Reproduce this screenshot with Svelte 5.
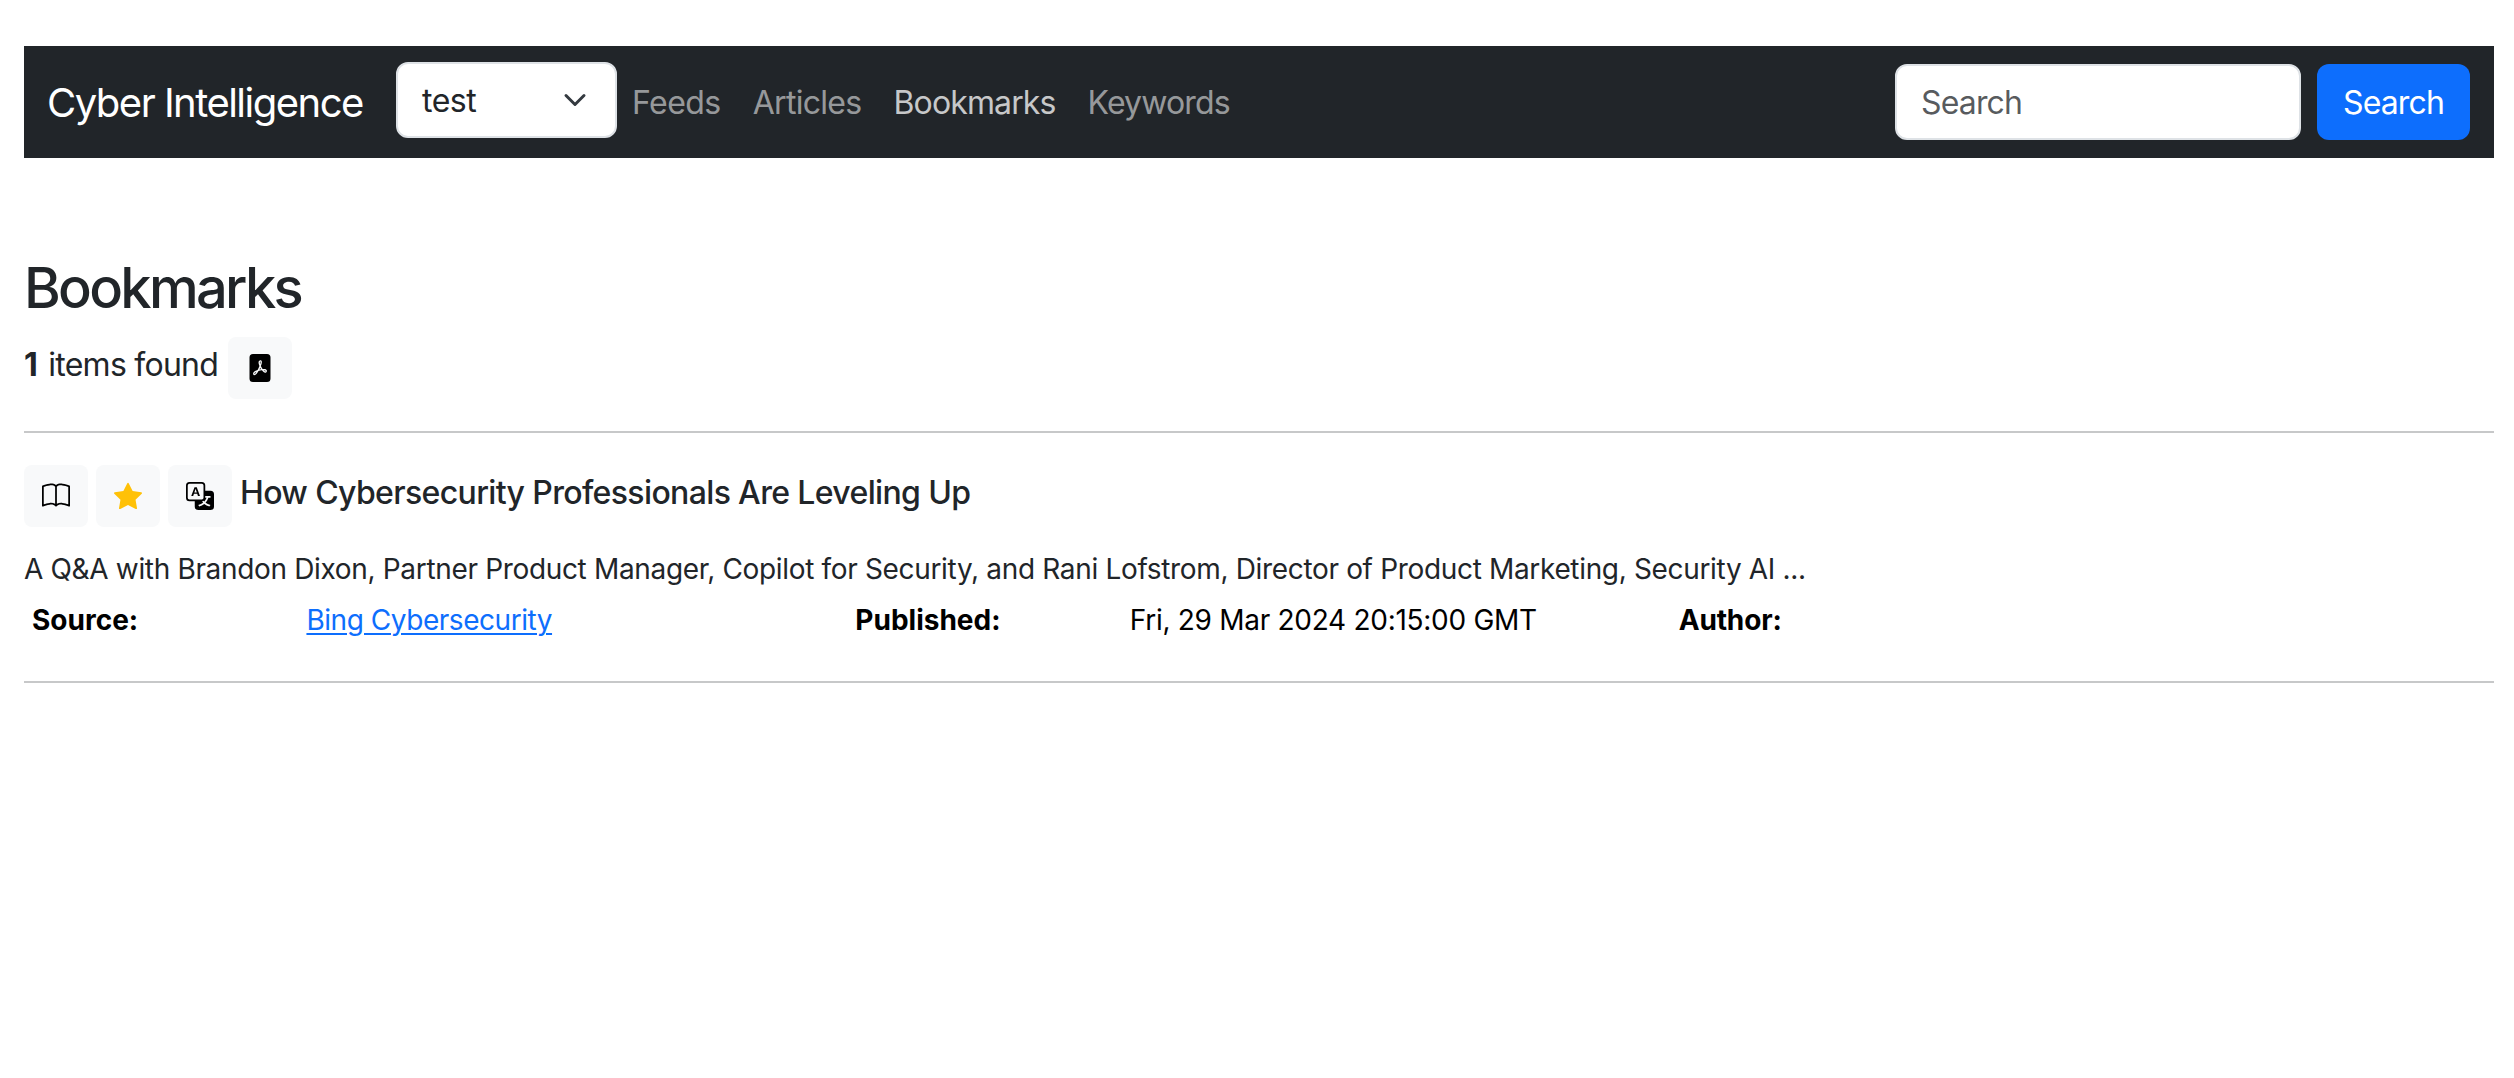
<script>
  const links = [
    { label: 'Feeds', cls: 'feeds' },
    { label: 'Articles', cls: 'articles' },
    { label: 'Bookmarks', cls: 'current' },
    { label: 'Keywords', cls: '' }
  ];

  const articles = [
    {
      title: 'How Cybersecurity Professionals Are Leveling Up',
      summary:
        'A Q&A with Brandon Dixon, Partner Product Manager, Copilot for Security, and Rani Lofstrom, Director of Product Marketing, Security AI ...',
      source: 'Bing Cybersecurity',
      published: 'Fri, 29 Mar 2024 20:15:00 GMT',
      author: ''
    }
  ];
</script>

{#snippet icon(name)}
  <svg class="icon" class:star={name === 'star'} viewBox="0 0 16 16" aria-hidden="true">
    {#if name === 'pdf'}
      <path d="M5.523 10.424q.21-.124.459-.238a8 8 0 0 1-.45.606c-.28.337-.498.516-.635.572l-.035.012a.3.3 0 0 1-.026-.044c-.056-.11-.054-.216.04-.36.106-.165.319-.354.647-.548m2.455-1.647q-.178.037-.356.078a21 21 0 0 0 .5-1.05 12 12 0 0 0 .51.858q-.326.048-.654.114m2.525.939a4 4 0 0 1-.435-.41q.344.007.612.054c.317.057.466.147.518.209a.1.1 0 0 1 .026.064.44.44 0 0 1-.06.2.3.3 0 0 1-.094.124.1.1 0 0 1-.069.015c-.09-.003-.258-.066-.498-.256M8.278 4.97c-.04.244-.108.524-.2.829a5 5 0 0 1-.089-.346c-.076-.353-.087-.63-.046-.822.038-.177.11-.248.196-.283a.5.5 0 0 1 .145-.04c.013.03.028.092.032.198q.008.183-.038.465z" />
      <path fill-rule="evenodd" d="M4 0h8a2 2 0 0 1 2 2v12a2 2 0 0 1-2 2H4a2 2 0 0 1-2-2V2a2 2 0 0 1 2-2m.165 11.668c.09.18.23.343.438.419.207.075.412.04.58-.03.318-.13.635-.436.926-.786.333-.401.683-.927 1.021-1.51a11.6 11.6 0 0 1 1.997-.406c.3.383.61.713.91.95.28.22.603.403.934.417a.86.86 0 0 0 .51-.138c.155-.101.27-.247.354-.416.09-.181.145-.37.138-.563a.84.84 0 0 0-.2-.518c-.226-.27-.596-.4-.96-.465a5.8 5.8 0 0 0-1.335-.05 11 11 0 0 1-.98-1.686c.25-.66.437-1.284.52-1.794.036-.218.055-.426.048-.614a1.24 1.24 0 0 0-.127-.538.7.7 0 0 0-.477-.365c-.202-.043-.41 0-.601.077-.377.15-.576.47-.651.823-.073.34-.04.736.046 1.136.088.406.238.848.43 1.295a20 20 0 0 1-1.062 2.227 7.7 7.7 0 0 0-1.482.645c-.37.22-.699.48-.897.787-.21.326-.275.714-.08 1.103" />
    {:else if name === 'book'}
      <path d="M1 2.828c.885-.37 2.154-.769 3.388-.893 1.33-.134 2.458.063 3.112.752v9.746c-.935-.53-2.12-.603-3.213-.493-1.18.12-2.37.461-3.287.811zm7.5-.141c.654-.689 1.782-.886 3.112-.752 1.234.124 2.503.523 3.388.893v9.923c-.918-.35-2.107-.692-3.287-.81-1.094-.111-2.278-.039-3.213.492zM8 1.783C7.015.936 5.587.81 4.287.94c-1.514.153-3.042.672-3.994 1.105A.5.5 0 0 0 0 2.5v11a.5.5 0 0 0 .707.455c.882-.4 2.303-.881 3.68-1.02 1.409-.142 2.59.087 3.223.877a.5.5 0 0 0 .78 0c.633-.79 1.814-1.019 3.222-.877 1.378.139 2.8.62 3.681 1.02A.5.5 0 0 0 16 13.5v-11a.5.5 0 0 0-.293-.455c-.952-.433-2.48-.952-3.994-1.105C10.413.809 8.985.936 8 1.783" />
    {:else if name === 'star'}
      <path d="M3.612 15.443c-.386.198-.824-.149-.746-.592l.83-4.73L.173 6.765c-.329-.314-.158-.888.283-.95l4.898-.696L7.538.792c.197-.39.73-.39.927 0l2.184 4.327 4.898.696c.441.062.612.636.282.95l-3.522 3.356.83 4.73c.078.443-.36.79-.746.592L8 13.187l-4.389 2.256z" />
    {:else if name === 'translate'}
      <path d="M4.545 6.714 4.11 8H3l1.862-5h1.284L8 8H6.833l-.435-1.286zm1.634-.736L5.5 3.956h-.049l-.679 2.022z" />
      <path d="M0 2a2 2 0 0 1 2-2h7a2 2 0 0 1 2 2v3h3a2 2 0 0 1 2 2v7a2 2 0 0 1-2 2H7a2 2 0 0 1-2-2v-3H2a2 2 0 0 1-2-2zm2-1a1 1 0 0 0-1 1v7a1 1 0 0 0 1 1h7a1 1 0 0 0 1-1V2a1 1 0 0 0-1-1zm7.138 9.995q.289.451.63.846c-.748.575-1.673 1.001-2.768 1.292.178.217.451.635.555.867 1.125-.359 2.08-.844 2.886-1.494.777.665 1.739 1.165 2.93 1.472.133-.254.414-.673.629-.89-1.125-.253-2.057-.694-2.82-1.284.681-.747 1.222-1.651 1.621-2.757H14V8h-3v1.047h.765c-.318.844-.74 1.546-1.272 2.13a6 6 0 0 1-.415-.492 2 2 0 0 1-.94.31" />
    {/if}
  </svg>
{/snippet}

<div class="page">
  <nav class="navbar">
    <a class="brand" href="#home">Cyber Intelligence</a>
    <button class="select" type="button">
      <span>test</span>
      <svg class="chevron" viewBox="0 0 16 16" aria-hidden="true"><path d="m2 5 6 6 6-6" /></svg>
    </button>
    <div class="links">
      {#each links as link}
        <a class="link {link.cls}" href="#{link.label}">{link.label}</a>
      {/each}
    </div>
    <form class="search">
      <input type="search" placeholder="Search" aria-label="Search" />
      <button class="submit" type="button">Search</button>
    </form>
  </nav>

  <h3>Bookmarks</h3>
  <div class="summary">
    <span class="count"><b>1</b> items found</span>
    <button class="tool" type="button" aria-label="Export PDF">{@render icon('pdf')}</button>
  </div>
  <hr />

  {#each articles as a}
    <article>
      <div class="head">
        <button class="tool" type="button" aria-label="Read">{@render icon('book')}</button>
        <button class="tool" type="button" aria-label="Bookmark">{@render icon('star')}</button>
        <button class="tool" type="button" aria-label="Translate">{@render icon('translate')}</button>
        <h5>{a.title}</h5>
      </div>
      <p class="desc">{a.summary}</p>
      <div class="meta">
        <b>Source:</b>
        <span class="wide"><a class="source" href="#source">{a.source}</a></span>
        <b>Published:</b>
        <span class="wide date">{a.published}</span>
        <b class="author">Author:</b>
        <span class="wide">{a.author}</span>
      </div>
    </article>
    <hr />
  {/each}
</div>

<style>
  :global(body) {
    background: #fff;
  }
  .page {
    padding: 46px 20px 0 24px;
    font-family: Inter, 'Liberation Sans', sans-serif;
    font-size: 32px;
    line-height: 48px;
    color: #212529;
  }
  a {
    text-decoration: none;
  }
  button,
  input {
    font: inherit;
    box-sizing: border-box;
    margin: 0;
  }

  .navbar {
    display: flex;
    align-items: center;
    height: 112px;
    box-sizing: border-box;
    padding: 0 24px 0 23px;
    background: #212529;
  }
  .brand {
    width: 349px;
    flex: none;
    padding-top: 2px;
    font-size: 40px;
    line-height: 60px;
    letter-spacing: -1.52px;
    color: #fff;
    white-space: nowrap;
  }
  .select {
    display: flex;
    align-items: center;
    justify-content: space-between;
    width: 221px;
    height: 76px;
    margin-bottom: 4px;
    padding: 0 28px 0 24px;
    border: 2px solid #dee2e6;
    border-radius: 12px;
    background: #fff;
    color: #212529;
    letter-spacing: -0.5px;
  }
  .select span {
    padding-top: 1px;
  }
  .chevron {
    width: 24px;
    height: 24px;
    fill: none;
    stroke: #343a40;
    stroke-width: 2;
    stroke-linecap: round;
    stroke-linejoin: round;
  }
  .links {
    display: flex;
    gap: 32px;
    margin-left: 15px;
    padding-top: 1px;
  }
  .link {
    color: rgba(255, 255, 255, 0.55);
    letter-spacing: -0.87px;
  }
  .feeds {
    letter-spacing: -0.55px;
  }
  .articles {
    letter-spacing: -0.7px;
  }
  .current {
    color: rgba(255, 255, 255, 0.75);
  }
  .search {
    display: flex;
    gap: 16px;
    margin-left: auto;
  }
  .search input {
    width: 406px;
    height: 76px;
    padding: 0 24px;
    border: 2px solid #dee2e6;
    border-radius: 12px;
    background: #fff;
    letter-spacing: -0.85px;
    appearance: none;
    outline: none;
  }
  .search input::placeholder {
    color: rgba(33, 37, 41, 0.75);
    opacity: 1;
  }
  .submit {
    width: 153px;
    height: 76px;
    padding: 1px 0 0;
    border: 0;
    border-radius: 12px;
    background: #0d6efd;
    color: #fff;
    letter-spacing: -0.85px;
  }

  h3 {
    margin: 96px 0 0;
    font-size: 56px;
    line-height: 68px;
    font-weight: 500;
    letter-spacing: -2.7px;
  }
  .summary {
    display: flex;
    margin-top: 15px;
  }
  .count {
    width: 204px;
    margin-top: 4px;
    letter-spacing: -0.75px;
    white-space: nowrap;
  }
  .count b {
    margin-right: 3px;
  }
  .tool {
    display: flex;
    align-items: center;
    justify-content: center;
    width: 64px;
    height: 62px;
    padding: 0;
    border: 0;
    border-radius: 8px;
    background: #f8f9fa;
  }
  .icon {
    width: 28px;
    height: 28px;
    fill: #000;
  }
  .star {
    fill: #ffc107;
  }
  hr {
    height: 2px;
    margin: 32px 0;
    border: 0;
    background: #c7c8c9;
  }

  .head {
    display: flex;
    gap: 8px;
  }
  h5 {
    margin: 8px 0 0;
    font-size: 32px;
    line-height: 40px;
    font-weight: 500;
    letter-spacing: -0.64px;
  }
  .desc {
    margin: 21px 0 0;
    font-size: 28px;
    line-height: 42px;
    letter-spacing: -0.335px;
    white-space: nowrap;
  }
  .meta {
    display: grid;
    grid-template-columns: repeat(9, 1fr);
    height: 48px;
    margin: 9px 0 34px;
    font-size: 28px;
    line-height: 42px;
    color: #000;
  }
  .meta > * {
    padding-left: 8px;
    white-space: nowrap;
  }
  .wide {
    grid-column: span 2;
  }
  .source {
    color: #0d6efd;
    letter-spacing: -0.46px;
    text-decoration: underline;
    text-decoration-thickness: 2px;
    text-underline-offset: 3px;
  }
  .date {
    letter-spacing: -0.28px;
  }
  .author {
    letter-spacing: -0.15px;
  }
</style>
